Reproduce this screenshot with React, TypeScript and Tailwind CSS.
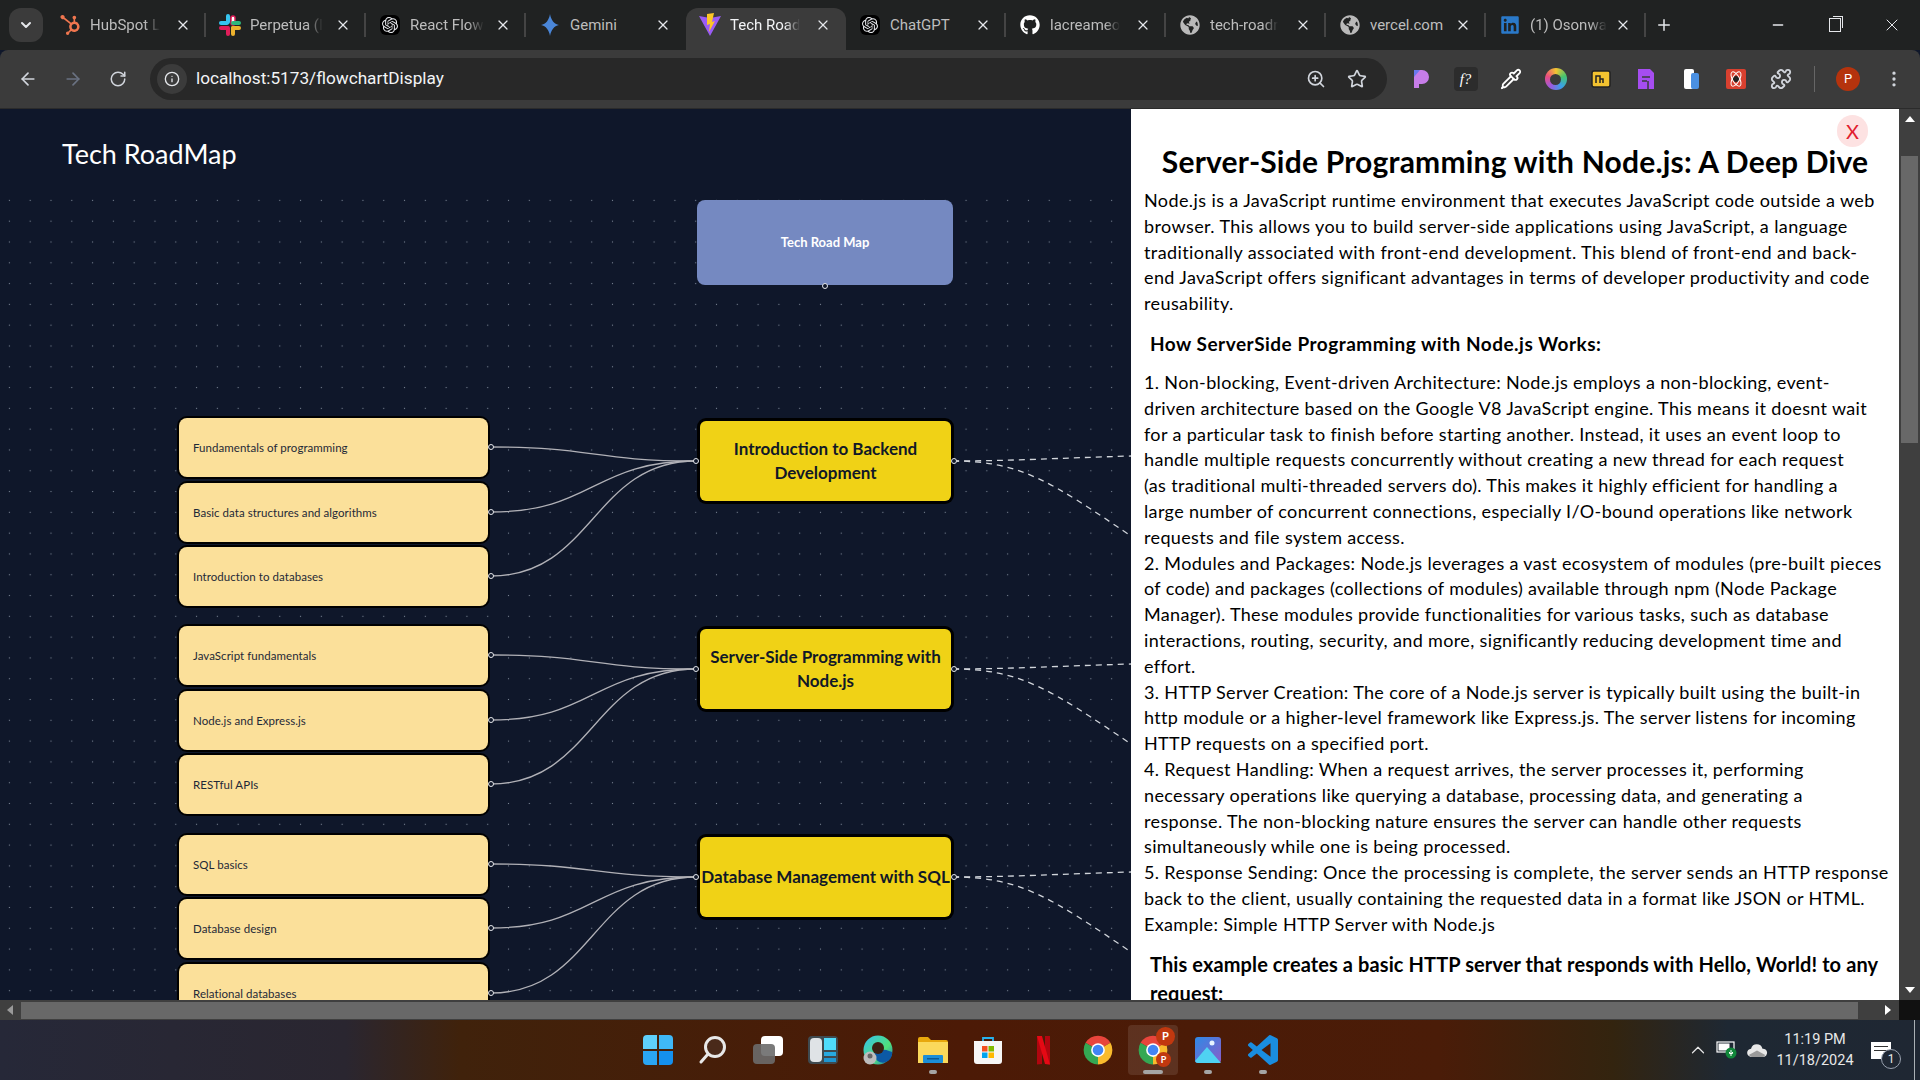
import { ArrowLeft, ArrowRight, ChevronDown, ChevronUp, EllipsisVertical, Info, Minus, Pipette, Plus, Puzzle, RotateCw, Star, X, ZoomIn } from 'lucide-react';
import { FaGithub, FaGlobeAmericas, FaLinkedin } from 'react-icons/fa';
import { SiHubspot, SiOpenai } from 'react-icons/si';
import type { ReactNode } from 'react';

const OpenAiIcon = () => (
  <span className="flex h-5 w-5 items-center justify-center rounded-md bg-black">
    <SiOpenai className="h-4 w-4 text-gray-200" />
  </span>
);

const SlackIcon = () => (
  <svg viewBox="0 0 24 24" className="h-6 w-6">
    <rect x="8" y="1" width="4" height="10" rx="2" fill="#36c5f0" />
    <rect x="1" y="8" width="10" height="4" rx="2" fill="#36c5f0" />
    <rect x="13" y="3" width="4" height="9" rx="2" fill="#ffffff" stroke="#e01e5a" strokeWidth="1.5" />
    <rect x="13" y="8" width="10" height="4" rx="2" fill="#2eb67d" />
    <rect x="1" y="13" width="10" height="4" rx="2" fill="#e01e5a" />
    <rect x="8" y="13" width="4" height="10" rx="2" fill="#e01e5a" />
    <rect x="13" y="13" width="10" height="4" rx="2" fill="#ecb22e" />
    <rect x="13" y="13" width="4" height="10" rx="2" fill="#ecb22e" />
  </svg>
);

const GeminiIcon = () => (
  <svg viewBox="0 0 24 24" className="h-6 w-6">
    <path d="M12 1c1 6 4 10 9 11-5 1-8 5-9 11-1-6-4-10-9-11 5-1 8-5 9-11z" fill="#4a86d8" />
  </svg>
);

const ViteIcon = () => (
  <svg viewBox="0 0 24 24" className="h-6 w-6">
    <path d="M1 3l11 20L23 3l-11 2z" fill="#9a5cf5" />
    <path d="M9 1l7-1-2 9 3-1-6 11 1-8-3 1z" fill="#fdc626" />
  </svg>
);

const tabs: { title: string; icon: ReactNode; active?: boolean }[] = [
  { title: 'HubSpot L', icon: <SiHubspot className="h-5 w-5 text-[#f0764f]" /> },
  { title: 'Perpetua (I', icon: <SlackIcon /> },
  { title: 'React Flow', icon: <OpenAiIcon /> },
  { title: 'Gemini', icon: <GeminiIcon /> },
  { title: 'Tech Road', icon: <ViteIcon />, active: true },
  { title: 'ChatGPT', icon: <OpenAiIcon /> },
  { title: 'lacreameo', icon: <FaGithub className="h-5 w-5 text-white" /> },
  { title: 'tech-roadr', icon: <FaGlobeAmericas className="h-5 w-5 text-[#b9b9b9]" /> },
  { title: 'vercel.com', icon: <FaGlobeAmericas className="h-5 w-5 text-[#b9b9b9]" /> },
  { title: '(1) Osonwa', icon: <FaLinkedin className="h-5 w-5 text-[#2a79c9]" /> },
];

function TabStrip() {
  return (
    <div className="flex h-[50px] items-end bg-[#202222] pl-[9px] font-['Roboto',sans-serif]">
      <div className="mb-2 mr-[3px] flex h-[34px] w-[34px] items-center justify-center rounded-xl bg-[#3b3b3b]">
        <ChevronDown size={16} strokeWidth={3} className="text-gray-200" />
      </div>
      {tabs.map((tab, i) => (
        <div
          key={tab.title}
          className={`flex h-[42px] w-[160px] items-center px-[12px] pb-[8px] ${tab.active ? 'rounded-t-xl bg-[#3b3b3b] text-gray-100' : 'text-[#bdbdbd]'}`}
        >
          <span className="flex w-6 shrink-0 items-center justify-center">{tab.icon}</span>
          <span className={`ml-[8px] whitespace-nowrap text-[15px] ${tab.title === 'Gemini' || tab.title === 'ChatGPT' || tab.title === 'vercel.com' ? '' : '[mask-image:linear-gradient(90deg,#000_78%,transparent)]'}`}>{tab.title}</span>
          <X size={16} strokeWidth={1.8} className="ml-auto shrink-0 text-gray-200" />
          <span className={`-mr-[12px] ml-[13px] h-[24px] w-[2px] shrink-0 ${i < tabs.length && !tab.active && !tabs[i + 1]?.active ? 'bg-[#444]' : ''}`} />
        </div>
      ))}
      <div className="flex h-[42px] w-[36px] items-center justify-center pb-[8px]">
        <Plus size={18} className="text-gray-200" />
      </div>
      <div className="ml-auto flex h-[50px] items-center">
        <div className="flex w-[57px] justify-center"><Minus size={16} className="text-gray-200" /></div>
        <div className="flex w-[57px] justify-center">
          <span className="relative h-[14px] w-[12px] border border-gray-200">
            <span className="absolute -right-[3px] -top-[3px] h-[12px] w-[10px] border-r border-t border-gray-200" />
          </span>
        </div>
        <div className="flex w-[57px] justify-center"><X size={20} strokeWidth={1.2} className="text-gray-200" /></div>
      </div>
    </div>
  );
}

function Ext({ children }: { children: ReactNode }) {
  return (
    <div className="flex w-[45px] justify-center">
      <svg viewBox="0 0 24 24" className="h-6 w-6">{children}</svg>
    </div>
  );
}

function Toolbar() {
  return (
    <div className="flex h-[59px] items-center rounded-t-lg border-b border-b-[#2b2b2b] bg-[#3b3b3b] pl-[5px]">
      <div className="flex w-[45px] justify-center"><ArrowLeft size={20} className="text-gray-300" /></div>
      <div className="flex w-[45px] justify-center"><ArrowRight size={20} className="text-gray-500" /></div>
      <div className="flex w-[45px] justify-center"><RotateCw size={18} className="text-gray-300" /></div>
      <div className="ml-[10px] flex h-[42px] w-[1237px] items-center rounded-full bg-[#282828] pl-[7px] pr-[20px]">
        <span className="flex h-[30px] w-[30px] items-center justify-center rounded-full bg-[#3b3b3b]">
          <Info size={16} className="text-gray-200" />
        </span>
        <span className="ml-[9px] font-['Roboto',sans-serif] text-[17.2px] text-gray-100">localhost:5173/flowchartDisplay</span>
        <ZoomIn size={20} className="ml-auto text-gray-300" />
        <Star size={20} className="ml-[21px] text-gray-300" />
      </div>
      <div className="ml-[11px] flex items-center">
        <Ext><path d="M5 3h8a7 7 0 0 1 0 14H10v4H5z" fill="#c77de8" /><path d="M5 3l6 0-6 7z" fill="#6a78ee" /></Ext>
        <div className="flex w-[45px] justify-center">
          <span className="flex h-6 w-6 items-center justify-center rounded bg-[#2c2c2c] font-['Liberation_Serif',serif] text-[15px] italic text-white">f?</span>
        </div>
        <div className="flex w-[45px] justify-center"><Pipette size={22} className="text-white" /></div>
        <div className="flex w-[45px] justify-center">
          <span className="flex h-[22px] w-[22px] items-center justify-center rounded-full bg-[conic-gradient(#f4c430,#46c46e,#3aa0e8,#9a5ae0,#ea4d7d,#f4c430)]">
            <span className="h-[11px] w-[11px] rounded-full bg-[#3b3b3b]" />
          </span>
        </div>
        <Ext><rect x="3" y="4" width="18" height="16" rx="2" fill="#f2c230" stroke="#222" strokeWidth="1.5" /><path d="M7 16V9h4v7M11 12h3v4" fill="none" stroke="#222" strokeWidth="1.5" /></Ext>
        <Ext><path d="M4 2h12l4 4v16H4z" fill="#a64df0" /><path d="M8 10h8M8 14h5M14 14v8" stroke="#3b3b3b" strokeWidth="1.5" /></Ext>
        <Ext><rect x="5" y="2" width="10" height="20" rx="2" fill="#ffffff" /><rect x="12" y="6" width="8" height="16" rx="2" fill="#4a90e2" /></Ext>
        <Ext><rect x="2" y="2" width="20" height="20" rx="2" fill="#d8402f" /><circle cx="12" cy="12" r="3" fill="#222" /><ellipse cx="12" cy="12" rx="8" ry="3.5" fill="none" stroke="#fff" strokeWidth="1" transform="rotate(60 12 12)" /><ellipse cx="12" cy="12" rx="8" ry="3.5" fill="none" stroke="#fff" strokeWidth="1" transform="rotate(-60 12 12)" /></Ext>
        <div className="flex w-[45px] justify-center"><Puzzle size={22} className="text-gray-300" /></div>
        <span className="ml-[11px] h-[26px] w-px bg-[#666]" />
        <span className="ml-[21px] flex h-6 w-6 items-center justify-center rounded-full bg-[#b5330d] font-['Roboto',sans-serif] text-[13px] text-white">P</span>
        <EllipsisVertical size={20} className="ml-[24px] text-gray-300" />
      </div>
    </div>
  );
}

const topics = [
  { title: 'Fundamentals of programming', pos: 'left-[179px] top-[223px]' },
  { title: 'Basic data structures and algorithms', pos: 'left-[179px] top-[288px]' },
  { title: 'Introduction to databases', pos: 'left-[179px] top-[352px]' },
  { title: 'JavaScript fundamentals', pos: 'left-[179px] top-[431px]' },
  { title: 'Node.js and Express.js', pos: 'left-[179px] top-[496px]' },
  { title: 'RESTful APIs', pos: 'left-[179px] top-[560px]' },
  { title: 'SQL basics', pos: 'left-[179px] top-[640px]' },
  { title: 'Database design', pos: 'left-[179px] top-[704px]' },
  { title: 'Relational databases', pos: 'left-[179px] top-[769px]' },
];

const stages = [
  { title: 'Introduction to Backend Development', pos: 'left-[700px] top-[226px]' },
  { title: 'Server-Side Programming with Node.js', pos: 'left-[700px] top-[434px]' },
  { title: 'Database Management with SQL', pos: 'left-[700px] top-[642px]' },
];

// y of each handle in canvas coordinates
const stageY = [266, 474, 682];
const topicY = [[252, 317, 381], [460, 525, 589], [669, 733, 798]];

function Handle({ x, y }: { x: number; y: number }) {
  return <circle cx={x} cy={y} r="2.5" fill="#0f172a" stroke="#e5e7eb" strokeWidth="1" />;
}

function FlowCanvas() {
  return (
    <div className="relative flex-1 overflow-hidden bg-[radial-gradient(#7a8494_0.8px,transparent_1px)] bg-[size:20.8px_20.8px] bg-[position:-1px_-5px]">
      <svg className="absolute inset-0 h-full w-full" fill="none">
        {stageY.map((sy, i) => (
          <g key={sy}>
            {topicY[i].map(ty => (
              <path key={ty} d={`M491 ${ty} C 593 ${ty}, 593 ${sy}, 696 ${sy}`} stroke="#b1b1b7" strokeWidth="1.3" />
            ))}
            <path d={`M953 ${sy} C 1010 ${sy}, 1060 ${sy - 3}, 1131 ${sy - 5}`} stroke="#d1d5db" strokeWidth="1.3" strokeDasharray="6 5" />
            <path d={`M953 ${sy} C 1020 ${sy}, 1050 ${sy + 20}, 1131 ${sy + 75}`} stroke="#d1d5db" strokeWidth="1.3" strokeDasharray="6 5" />
          </g>
        ))}
      </svg>
      <div className="absolute left-[697px] top-[5px] flex h-[85px] w-[256px] items-center justify-center rounded-lg bg-[#7589c1] text-[13px] font-bold text-white">
        Tech Road Map
      </div>
      {topics.map(t => (
        <div
          key={t.title}
          className={`absolute flex h-[59px] w-[309px] items-center rounded-lg bg-[#fbe09a] pl-[14px] text-[11.5px] tracking-[0.05px] text-[#1f2937] ring-2 ring-black ${t.pos}`}
        >
          {t.title}
        </div>
      ))}
      {stages.map(s => (
        <div
          key={s.title}
          className={`absolute flex h-[80px] w-[251px] items-center justify-center rounded-md bg-[#f0d216] text-center text-[17px] font-bold leading-[24px] text-[#111827] ring-[3px] ring-black ${s.pos}`}
        >
          {s.title}
        </div>
      ))}
      <svg className="pointer-events-none absolute inset-0 h-full w-full">
        <Handle x={825} y={91} />
        {stageY.map((sy, i) => (
          <g key={sy}>
            <Handle x={696} y={sy} />
            <Handle x={954} y={sy} />
            {topicY[i].map(ty => <Handle key={ty} x={491} y={ty} />)}
          </g>
        ))}
      </svg>
    </div>
  );
}

const intro = [
  'Node.js is a JavaScript runtime environment that executes JavaScript code outside a web',
  'browser. This allows you to build server-side applications using JavaScript, a language',
  'traditionally associated with front-end development. This blend of front-end and back-',
  'end JavaScript offers significant advantages in terms of developer productivity and code',
  'reusability.',
];

const details = [
  '1. Non-blocking, Event-driven Architecture: Node.js employs a non-blocking, event-',
  'driven architecture based on the Google V8 JavaScript engine. This means it doesnt wait',
  'for a particular task to finish before starting another. Instead, it uses an event loop to',
  'handle multiple requests concurrently without creating a new thread for each request',
  '(as traditional multi-threaded servers do). This makes it highly efficient for handling a',
  'large number of concurrent connections, especially I/O-bound operations like network',
  'requests and file system access.',
  '2. Modules and Packages: Node.js leverages a vast ecosystem of modules (pre-built pieces',
  'of code) and packages (collections of modules) available through npm (Node Package',
  'Manager). These modules provide functionalities for various tasks, such as database',
  'interactions, routing, security, and more, significantly reducing development time and',
  'effort.',
  '3. HTTP Server Creation: The core of a Node.js server is typically built using the built-in',
  'http module or a higher-level framework like Express.js. The server listens for incoming',
  'HTTP requests on a specified port.',
  '4. Request Handling: When a request arrives, the server processes it, performing',
  'necessary operations like querying a database, processing data, and generating a',
  'response. The non-blocking nature ensures the server can handle other requests',
  'simultaneously while one is being processed.',
  '5. Response Sending: Once the processing is complete, the server sends an HTTP response',
  'back to the client, usually containing the requested data in a format like JSON or HTML.',
  'Example: Simple HTTP Server with Node.js',
];

function DetailPanel() {
  return (
    <div className="relative w-[768px] overflow-hidden bg-white px-[13px] pt-[34px] text-black">
      <button className="absolute right-[31px] top-[6px] flex h-[32px] w-[31px] items-center justify-center rounded-full bg-[#fde2e2] text-[20px] text-[#e11d2e]">
        X
      </button>
      <h1 className="whitespace-nowrap text-center text-[30px] font-bold leading-[36px] tracking-[0.2px]">Server-Side Programming with Node.js: A Deep Dive</h1>
      <div className="mt-[9px] text-[18px] leading-[25.8px] tracking-[0.4px]">
        {intro.map(line => <div key={line} className="whitespace-nowrap">{line}</div>)}
      </div>
      <h2 className="mb-[11px] ml-[6px] mt-[12px] text-[19px] font-bold leading-[30px] tracking-[0.5px]">How ServerSide Programming with Node.js Works:</h2>
      <div className="text-[18px] leading-[25.8px] tracking-[0.35px]">
        {details.map(line => <div key={line} className="whitespace-nowrap">{line}</div>)}
      </div>
      <h2 className="ml-[6px] mt-[12px] text-[20px] font-bold leading-[29px] tracking-[0.1px]">
        <div className="whitespace-nowrap">This example creates a basic HTTP server that responds with Hello, World! to any</div>
        <div>request:</div>
      </h2>
    </div>
  );
}

function ScrollArrow({ up }: { up: boolean }) {
  return <span className={`h-0 w-0 border-x-[5px] border-x-transparent ${up ? 'border-b-[6px] border-b-white' : 'border-t-[6px] border-t-white'}`} />;
}

function VerticalScrollbar() {
  return (
    <div className="flex w-[21px] flex-col items-center bg-[#3f3f3f]">
      <div className="flex h-[20px] items-center"><ScrollArrow up /></div>
      <div className="mt-[27px] h-[287px] w-[17px] bg-[#686868]" />
      <div className="mt-auto flex h-[20px] items-center"><ScrollArrow up={false} /></div>
    </div>
  );
}

function HorizontalScrollbar() {
  return (
    <div className="flex h-[20px] items-center bg-[#3f3f3f]">
      <span className="ml-[7px] h-0 w-0 border-y-[5px] border-r-[6px] border-y-transparent border-r-[#9a9a9a]" />
      <div className="ml-[8px] h-[17px] w-[1837px] bg-[#686868]" />
      <span className="ml-[27px] h-0 w-0 border-y-[5px] border-l-[6px] border-y-transparent border-l-white" />
      <div className="ml-auto h-full w-[21px] bg-[#111111]" />
    </div>
  );
}

function ChromeLogo({ className }: { className: string }) {
  return (
    <svg viewBox="0 0 48 48" className={className}>
      <path d="M24 24L4.100 12.500A23 23 0 0 1 43.900 12.500z" fill="#e8453c" />
      <path d="M24 24L43.900 12.500A23 23 0 0 1 24 47z" fill="#f9bb2d" />
      <path d="M24 24L24 47A23 23 0 0 1 4.100 12.500z" fill="#34a853" />
      <circle cx="24" cy="24" r="11" fill="#fff" />
      <circle cx="24" cy="24" r="8.500" fill="#4285f4" />
    </svg>
  );
}

function TaskIcon({ children, dot, active }: { children: ReactNode; dot?: boolean; active?: boolean }) {
  return (
    <div className={`relative flex h-[50px] w-[50px] items-center justify-center rounded ${active ? 'bg-white/10' : ''}`}>
      {children}
      {dot && <span className={`absolute bottom-[1px] h-[4px] rounded-full bg-[#a5a5a5] ${active ? 'w-[20px]' : 'w-[8px]'}`} />}
    </div>
  );
}

function Taskbar() {
  return (
    <div className="relative flex h-[60px] items-center bg-[linear-gradient(90deg,#262838_0%,#2a2630_18%,#40220b_24%,#4c1a06_50%,#4a1c08_75%,#33240f_84%,#1e2833_90%,#1f2733_100%)] pl-[633px]">
      <div className="flex gap-[5px]">
        <TaskIcon>
          <span className="grid grid-cols-2 gap-[2px]">
            <span className="h-[14px] w-[14px] rounded-tl-sm bg-[#5fd0fb]" />
            <span className="h-[14px] w-[14px] rounded-tr-sm bg-[#3fb8f7]" />
            <span className="h-[14px] w-[14px] rounded-bl-sm bg-[#2aa5f2]" />
            <span className="h-[14px] w-[14px] rounded-br-sm bg-[#1490ee]" />
          </span>
        </TaskIcon>
        <TaskIcon>
          <svg viewBox="0 0 30 30" className="h-[30px] w-[30px]" fill="none">
            <circle cx="17" cy="12" r="9.500" fill="#4a2a1a" stroke="#e8e8e8" strokeWidth="3" />
            <path d="M10 19l-7 8" stroke="#e8e8e8" strokeWidth="3" strokeLinecap="round" />
          </svg>
        </TaskIcon>
        <TaskIcon>
          <span className="relative h-[28px] w-[30px]">
            <span className="absolute right-0 top-0 h-[20px] w-[22px] rounded-sm bg-white" />
            <span className="absolute bottom-0 left-0 h-[20px] w-[22px] rounded-sm bg-[#6b6b6b]/90" />
          </span>
        </TaskIcon>
        <TaskIcon>
          <span className="flex h-[28px] w-[30px] gap-[2px] rounded-sm bg-[#3f4a50] p-[2px]">
            <span className="w-[12px] rounded-sm bg-[#dfe3e6]" />
            <span className="flex flex-1 flex-col gap-[2px]">
              <span className="h-[12px] bg-[#4fdcfb]" />
              <span className="h-[4px] bg-[#27a9e0]" />
              <span className="h-[4px] bg-[#1f95d0]" />
            </span>
          </span>
        </TaskIcon>
        <TaskIcon>
          <svg viewBox="0 0 30 30" className="h-[30px] w-[30px]">
            <defs>
              <linearGradient id="edge" x1="0" y1="0" x2="1" y2="1">
                <stop offset="0" stopColor="#35c1f1" />
                <stop offset="0.6" stopColor="#50e07a" />
                <stop offset="1" stopColor="#1b6fc4" />
              </linearGradient>
            </defs>
            <circle cx="15" cy="15" r="14.500" fill="url(#edge)" />
            <path d="M29 17a9 9 0 0 1-18 3c0-5 7-8 18-3z" fill="#0c59a4" />
            <circle cx="15" cy="13" r="6" fill="#3a2012" />
            <circle cx="7" cy="23" r="6.500" fill="#bdbdbd" />
            <circle cx="7" cy="21" r="2.500" fill="#666" />
          </svg>
        </TaskIcon>
        <TaskIcon dot>
          <svg viewBox="0 0 30 30" className="h-[30px] w-[30px]">
            <path d="M0 4a2 2 0 0 1 2-2h8l3 3h15a2 2 0 0 1 2 2v21H0z" fill="#e8a80c" />
            <rect y="7" width="30" height="21" fill="#fbd95b" />
            <rect x="5" y="20" width="20" height="8" rx="1" fill="#1c8fd8" />
            <rect x="9" y="23" width="12" height="1.500" fill="#0b5a94" />
          </svg>
        </TaskIcon>
        <TaskIcon>
          <svg viewBox="0 0 30 30" className="h-[30px] w-[30px]">
            <path d="M10 6V3h10v3" fill="none" stroke="#27b2ee" strokeWidth="1.8" />
            <path d="M1 6h28v20a3 3 0 0 1-3 3H4a3 3 0 0 1-3-3z" fill="#f6f6f6" />
            <rect x="9" y="11" width="5.500" height="5.500" fill="#f25022" />
            <rect x="15.500" y="11" width="5.500" height="5.500" fill="#7fba00" />
            <rect x="9" y="17.500" width="5.500" height="5.500" fill="#00a4ef" />
            <rect x="15.500" y="17.500" width="5.500" height="5.500" fill="#ffb900" />
          </svg>
        </TaskIcon>
        <TaskIcon>
          <svg viewBox="0 0 30 30" className="h-[30px] w-[30px]">
            <path d="M9 1h5v28l-5 .5zM17 1h5v28.500l-5-.5z" fill="#b1060f" />
            <path d="M9 1h5l8 28.500-5-.5z" fill="#e50914" />
          </svg>
        </TaskIcon>
        <TaskIcon><ChromeLogo className="h-[30px] w-[30px]" /></TaskIcon>
        <TaskIcon dot active>
          <span className="relative">
            <ChromeLogo className="h-[30px] w-[30px]" />
            <span className="absolute -right-[7px] -top-[8px] flex h-[19px] w-[19px] items-center justify-center rounded-full bg-[#c1380f] text-[11px] font-bold text-white">P</span>
            <span className="absolute -right-[3px] bottom-[-2px] flex h-[15px] w-[15px] items-center justify-center rounded-full bg-[#c1380f] text-[9px] font-bold text-white">P</span>
          </span>
        </TaskIcon>
        <TaskIcon dot>
          <svg viewBox="0 0 30 30" className="h-[30px] w-[30px]">
            <defs>
              <linearGradient id="photos" x1="0" y1="0" x2="1" y2="1">
                <stop offset="0" stopColor="#2e8ae6" />
                <stop offset="1" stopColor="#8a5cc8" />
              </linearGradient>
            </defs>
            <rect x="2" y="2" width="26" height="26" rx="3" fill="url(#photos)" />
            <circle cx="19" cy="8" r="2.500" fill="#e8f4ff" />
            <path d="M2 26l12-14 14 16H5a3 3 0 0 1-3-2z" fill="#4fd2f2" />
          </svg>
        </TaskIcon>
        <TaskIcon dot>
          <svg viewBox="0 0 24 24" className="h-[30px] w-[30px]">
            <path fill="#1a8ddf" d="M23.15 2.587L18.21.21a1.494 1.494 0 0 0-1.705.29l-9.46 8.63-4.12-3.128a.999.999 0 0 0-1.276.057L.327 7.261A1 1 0 0 0 .326 8.74L3.899 12 .326 15.26a1 1 0 0 0 .001 1.479L1.65 17.94a.999.999 0 0 0 1.276.057l4.12-3.128 9.46 8.63a1.492 1.492 0 0 0 1.704.29l4.942-2.377A1.5 1.5 0 0 0 24 20.06V3.939a1.5 1.5 0 0 0-.85-1.352zm-5.146 14.861L10.826 12l7.178-5.448v10.896z" />
          </svg>
        </TaskIcon>
      </div>
      <div className="ml-auto flex h-full items-center pr-[5px] font-['Roboto',sans-serif] text-[#e8e8e8]">
        <ChevronUp size={22} strokeWidth={1.3} />
        <svg viewBox="0 0 24 20" className="ml-[7px] h-[20px] w-[24px]">
          <rect x="1" y="2" width="17" height="10" fill="none" stroke="#fff" strokeWidth="1.2" />
          <rect x="2.500" y="3.500" width="11" height="7" fill="#fff" />
          <circle cx="15" cy="13" r="5.500" fill="#11873a" />
          <path d="M15 10v6M13.500 12v1.500h3V12" stroke="#fff" strokeWidth="1" fill="none" />
        </svg>
        <svg viewBox="0 0 24 16" className="ml-[6px] h-[15px] w-[22px]">
          <path d="M6 15a4.500 4.500 0 0 1-.5-9A6.500 6.500 0 0 1 18 6a4.500 4.500 0 0 1 1 9z" fill="#e8e8e8" />
          <path d="M3 13l9-5 9 5-2 2H6z" fill="#9a9a9a" />
        </svg>
        <div className="ml-[8px] flex w-[78px] flex-col items-center text-[14.5px] leading-[21px]">
          <span>11:19 PM</span>
          <span>11/18/2024</span>
        </div>
        <span className="relative ml-[17px] h-[17px] w-[20px] bg-white">
          <span className="absolute left-[3px] top-[4px] h-[1.5px] w-[14px] bg-[#333]" />
          <span className="absolute left-[3px] top-[8px] h-[1.5px] w-[14px] bg-[#333]" />
          <span className="absolute -bottom-[10px] -right-[10px] flex h-[20px] w-[20px] items-center justify-center rounded-full border border-gray-400 bg-[#1f2733] text-[12px]">1</span>
        </span>
        <span className="ml-[23px] h-[60px] w-px bg-[#aab0b5]" />
      </div>
    </div>
  );
}

export default function App() {
  return (
    <div className="flex h-screen w-[1920px] flex-col overflow-hidden bg-[#0f172a] font-['Lato',sans-serif]">
      <TabStrip />
      <Toolbar />
      <div className="flex min-h-0 flex-1">
        <div className="flex w-[1131px] flex-col bg-[#0f172a]">
          <div className="flex h-[86px] shrink-0 items-center pl-[62px] pt-[5px] text-[27px] text-white">Tech RoadMap</div>
          <FlowCanvas />
        </div>
        <DetailPanel />
        <VerticalScrollbar />
      </div>
      <HorizontalScrollbar />
      <Taskbar />
    </div>
  );
}
